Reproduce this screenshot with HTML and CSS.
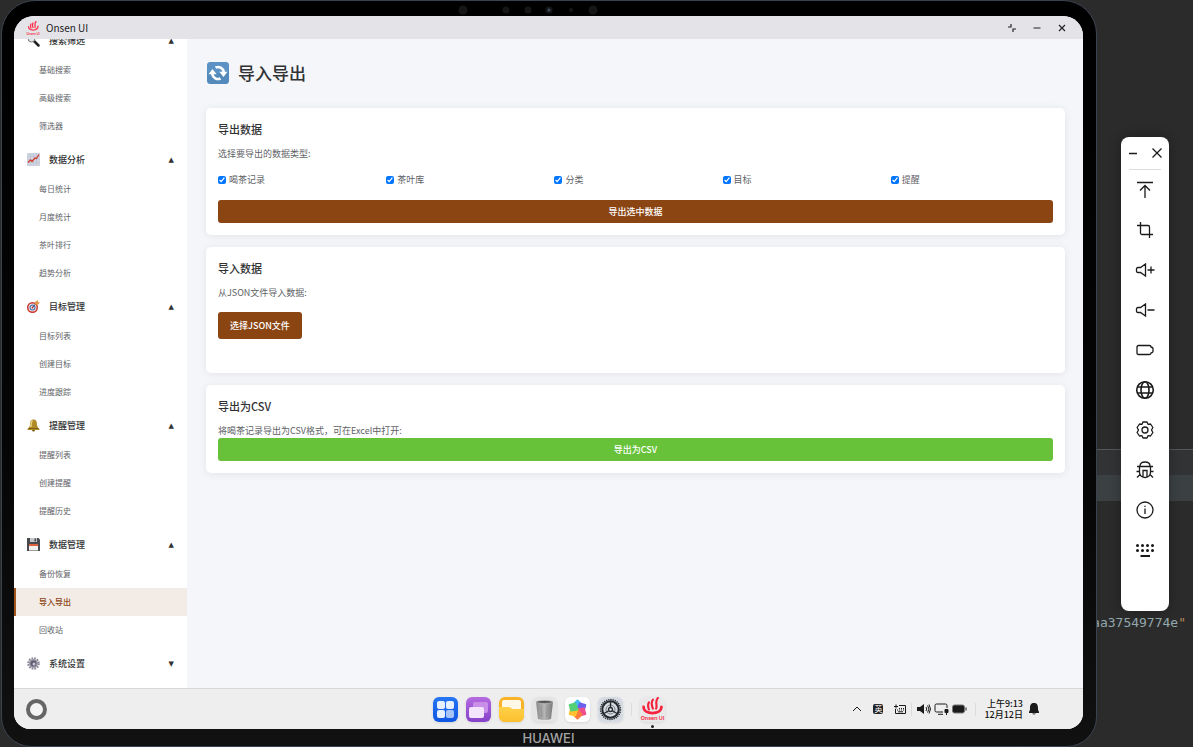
FILE: index.html
```html
<!DOCTYPE html>
<html lang="zh-CN">
<head>
    <meta charset="UTF-8">
    <title>导入导出</title>
    <link rel="stylesheet" href="styles.css">
</head>
<body>
    <div class="editor">
        <div class="editor-split"></div>
        <code class="editor-code">aa37549774e<span class="quote">"</span></code>
    </div>

    <div class="tablet">
        <svg class="sensors" width="182" height="15" viewBox="0 0 182 15">
            <g fill="#161616">
                <circle cx="5" cy="9" r="4.5"/><circle cx="48" cy="9" r="3.6"/><circle cx="70" cy="9" r="3.6"/>
                <circle cx="91" cy="9" r="3.6"/><circle cx="113" cy="9" r="2"/><circle cx="135" cy="9" r="4.5"/>
            </g>
            <circle cx="91" cy="9" r="1.5" fill="#3d4d60"/>
        </svg>

        <div class="screen">
            <header class="titlebar">
                <svg width="14" height="14" viewBox="0 0 28 28">
                    <g fill="none" stroke="#ff2d46" stroke-width="2.500" stroke-linecap="round">
                        <path d="M10 6c-2 3-1 5 0 8M14 4c-2 4-1 6 0 9M20 1c-4 5-1 8-2 12"/>
                        <path d="M5 11c0 5 4 7 9 7s10-2 10-8"/>
                    </g>
                    <text x="14" y="27" class="logo-text">Onsen UI</text>
                </svg>
                <span class="app-name">Onsen UI</span>
                <div class="window-buttons">
                    <button aria-label="还原"><svg width="10" height="10" viewBox="0 0 10 10"><path d="M1 4h3V1M9 6H6v3"/></svg></button>
                    <button aria-label="最小化"><svg width="10" height="10" viewBox="0 0 10 10"><path d="M1.500 5h7"/></svg></button>
                    <button aria-label="关闭"><svg width="10" height="10" viewBox="0 0 10 10"><path d="M2 2l6 6M8 2l-6 6"/></svg></button>
                </div>
            </header>

            <div class="app">
                <nav class="sidebar">
                    <section class="group">
                        <button class="group-title">
                            <svg width="13" height="13" viewBox="0 0 26 26"><path d="M14 14l9 9" stroke="#222" stroke-width="5" stroke-linecap="round"/><circle cx="9" cy="9" r="7" fill="#dfe9ee" stroke="#777" stroke-width="2"/></svg>
                            <span>搜索筛选</span><i class="arrow">▲</i>
                        </button>
                        <a href="#">基础搜索</a>
                        <a href="#">高级搜索</a>
                        <a href="#">筛选器</a>
                    </section>
                    <section class="group">
                        <button class="group-title">
                            <svg width="13" height="13" viewBox="0 0 26 26"><path fill="#cfd3df" d="M0 0h26v26H0z"/><path d="M0 7h26M0 13h26M0 19h26M7 0v26M13 0v26M19 0v26" stroke="#b9bfd0"/><path d="M2 19l5-5 3 3 6-7 3 1 5-8" fill="none" stroke="#d4392c" stroke-width="2.500"/></svg>
                            <span>数据分析</span><i class="arrow">▲</i>
                        </button>
                        <a href="#">每日统计</a>
                        <a href="#">月度统计</a>
                        <a href="#">茶叶排行</a>
                        <a href="#">趋势分析</a>
                    </section>
                    <section class="group">
                        <button class="group-title">
                            <svg width="13" height="13" viewBox="0 0 26 26"><circle cx="11" cy="15" r="11" fill="#c9352e"/><circle cx="11" cy="15" r="8" fill="#f1e8e8"/><circle cx="11" cy="15" r="6" fill="#3f6aa8"/><circle cx="11" cy="15" r="4" fill="#f1e8e8"/><circle cx="11" cy="15" r="2" fill="#c9352e"/><path d="M11 15l8-9" stroke="#33435c" stroke-width="2"/><path d="M16 4l6-4v4l4 1-5 5-5-1z" fill="#e09a4c"/></svg>
                            <span>目标管理</span><i class="arrow">▲</i>
                        </button>
                        <a href="#">目标列表</a>
                        <a href="#">创建目标</a>
                        <a href="#">进度跟踪</a>
                    </section>
                    <section class="group">
                        <button class="group-title">
                            <svg width="13" height="13" viewBox="0 0 26 26"><circle cx="13" cy="22" r="3" fill="#7a5a10"/><path d="M13 1c6 0 7 5 7 10 0 4 2 6 5 9v2H1v-2c3-3 5-5 5-9C6 6 7 1 13 1z" fill="#b08a26"/><path d="M11 3c-3 2-3 8-3 13" stroke="#ecd486" stroke-width="3" fill="none"/><path d="M3 19h20" stroke="#7d5d12" stroke-width="2"/></svg>
                            <span>提醒管理</span><i class="arrow">▲</i>
                        </button>
                        <a href="#">提醒列表</a>
                        <a href="#">创建提醒</a>
                        <a href="#">提醒历史</a>
                    </section>
                    <section class="group">
                        <button class="group-title">
                            <svg width="13" height="13" viewBox="0 0 26 26"><path d="M0 0h23l3 3v23H0z" fill="#484a50"/><path d="M6 0h14v8H6z" fill="#c5c7cb"/><path d="M15 1h3v6h-3z" fill="#484a50"/><path d="M4 12h18v13H4z" fill="#f3f1ef"/><path d="M4 12h18v4H4z" fill="#e0623c"/></svg>
                            <span>数据管理</span><i class="arrow">▲</i>
                        </button>
                        <a href="#">备份恢复</a>
                        <a href="#" class="active">导入导出</a>
                        <a href="#">回收站</a>
                    </section>
                    <section class="group">
                        <button class="group-title">
                            <svg width="13" height="13" viewBox="0 0 26 26"><circle cx="13" cy="13" r="10.500" fill="none" stroke="#8a8794" stroke-width="4" stroke-dasharray="3.400 2.100"/><circle cx="13" cy="13" r="9" fill="#9a98a5"/><circle cx="13" cy="13" r="6" fill="#5d5c70"/><circle cx="14" cy="14" r="3" fill="#c9c8d2"/></svg>
                            <span>系统设置</span><i class="arrow">▼</i>
                        </button>
                    </section>
                </nav>

                <main class="content">
                    <h1>
                        <svg width="24" height="24" viewBox="0 0 24 24">
                            <rect x="1" y="1" width="22" height="22" rx="3.500" fill="#5389bb"/>
                            <rect x="1" y="1" width="22" height="11" rx="3.500" fill="#629ac9" opacity=".6"/>
                            <g fill="none" stroke="#fff" stroke-width="2.600">
                                <path d="M6.200 13a6 6 0 0 0 8.300 4.500"/>
                                <path d="M17.800 11a6 6 0 0 0-8.300-4.500"/>
                            </g>
                            <path fill="#fff" d="M2.500 13.300l4-5.300 4.200 5.300zM21.500 10.700l-4 5.300-4.200-5.300z"/>
                        </svg>
                        导入导出
                    </h1>

                    <section class="card">
                        <h3>导出数据</h3>
                        <p>选择要导出的数据类型:</p>
                        <div class="options">
                            <label><input type="checkbox" checked>喝茶记录</label>
                            <label><input type="checkbox" checked>茶叶库</label>
                            <label><input type="checkbox" checked>分类</label>
                            <label><input type="checkbox" checked>目标</label>
                            <label><input type="checkbox" checked>提醒</label>
                        </div>
                        <button class="btn btn-block">导出选中数据</button>
                    </section>

                    <section class="card">
                        <h3>导入数据</h3>
                        <p>从JSON文件导入数据:</p>
                        <button class="btn btn-file">选择JSON文件</button>
                        <div class="file-status"></div>
                    </section>

                    <section class="card">
                        <h3>导出为CSV</h3>
                        <p class="tight">将喝茶记录导出为CSV格式，可在Excel中打开:</p>
                        <button class="btn btn-block btn-green">导出为CSV</button>
                    </section>
                </main>
            </div>

            <footer class="taskbar">
                <button class="home" aria-label="主页"></button>
                <div class="dock">
                    <button aria-label="应用中心"><svg viewBox="0 0 25 25">
                        <defs>
                            <linearGradient id="blue" x2="0" y2="1"><stop stop-color="#2576f5"/><stop offset="1" stop-color="#0f55e2"/></linearGradient>
                            <linearGradient id="purple" x2="0" y2="1"><stop stop-color="#b56be0"/><stop offset="1" stop-color="#8541c8"/></linearGradient>
                            <linearGradient id="yellow" x2="0" y2="1"><stop stop-color="#ffd049"/><stop offset="1" stop-color="#fcc02e"/></linearGradient>
                            <linearGradient id="metal"><stop stop-color="#8b8b8b"/><stop offset=".5" stop-color="#b5b5b5"/><stop offset="1" stop-color="#777"/></linearGradient>
                        </defs>
                        <rect width="25" height="25" rx="6" fill="url(#blue)"/>
                        <g fill="#e6f0ff"><rect x="4" y="4" width="8" height="8" rx="2"/><rect x="13" y="4" width="8" height="8" rx="2"/><rect x="4" y="13" width="8" height="8" rx="2"/><rect x="13" y="13" width="8" height="8" rx="2" opacity=".7"/></g>
                    </svg></button>
                    <button aria-label="多任务"><svg viewBox="0 0 25 25">
                        <rect width="25" height="25" rx="6" fill="url(#purple)"/>
                        <rect x="7" y="5" width="15" height="11" rx="2" fill="#c98fe8"/><rect x="3" y="10" width="15" height="11" rx="2" fill="#f3e3fc"/>
                    </svg></button>
                    <button aria-label="文件管理"><svg viewBox="0 0 25 25">
                        <rect width="25" height="25" rx="6" fill="#f9b326"/><rect x="3" y="3" width="19" height="12" rx="2" fill="#fff8e6"/>
                        <path d="M0 10h10q1 0 2 1t2 1h11v7a6 6 0 0 1-6 6H6a6 6 0 0 1-6-6z" fill="url(#yellow)"/>
                    </svg></button>
                    <button aria-label="回收站"><svg viewBox="0 0 25 25">
                        <rect width="25" height="25" rx="6" fill="#e4e4e4"/><path d="M4 5h17l-2 17q-6 2-13 0z" fill="url(#metal)"/>
                        <ellipse cx="12.500" cy="5" rx="8.500" ry="1.500" fill="#555" stroke="#bbb" stroke-width=".7"/>
                        <path d="M9 9l1 11M15.500 9l-1 11" stroke="#999" stroke-width="1.500"/>
                    </svg></button>
                    <button aria-label="图库"><svg viewBox="0 0 25 25">
                        <rect width="25" height="25" rx="6" fill="#fff"/>
                        <g transform="translate(12.500 12.500)" stroke-width="2" stroke-linejoin="round">
                            <path d="M0 0L-4-5 0-9 4-5z" fill="#46b9f0" stroke="#46b9f0"/>
                            <path d="M0 0L-4-5 0-9 4-5z" fill="#6a62ee" stroke="#6a62ee" transform="rotate(60)"/>
                            <path d="M0 0L-4-5 0-9 4-5z" fill="#ef4f8c" stroke="#ef4f8c" transform="rotate(120)"/>
                            <path d="M0 0L-4-5 0-9 4-5z" fill="#ff7a3c" stroke="#ff7a3c" transform="rotate(180)"/>
                            <path d="M0 0L-4-5 0-9 4-5z" fill="#ffc130" stroke="#ffc130" transform="rotate(240)"/>
                            <path d="M0 0L-4-5 0-9 4-5z" fill="#54cf76" stroke="#54cf76" transform="rotate(300)"/>
                        </g>
                    </svg></button>
                    <button aria-label="设置"><svg viewBox="0 0 25 25">
                        <rect width="25" height="25" rx="6" fill="#d5dae3"/>
                        <g fill="none" stroke="#25282d"><circle cx="12.500" cy="12.500" r="9.900" stroke-width="1.500" stroke-dasharray="1.300 .9"/><circle cx="12.500" cy="12.500" r="8.200" stroke-width="2"/><circle cx="12.500" cy="12.500" r="4.500" stroke="#777c85"/><circle cx="12.500" cy="12.500" r="2" stroke-width="1.300"/><path d="M12.500 5v5.500M6 16.500l4.700-2.800M19 16.500l-4.700-2.800" stroke-width="1.300"/></g>
                    </svg></button>
                    <span class="divider"></span>
                    <button class="running" aria-label="Onsen UI"><svg viewBox="0 0 28 28">
                        <rect width="28" height="28" rx="7" fill="#e9e9ea"/>
                        <g fill="none" stroke="#f5233d" stroke-width="2.400" stroke-linecap="round">
                            <path d="M10 6c-2 3-1 5 0 8M14.500 3c-3 4-1 7 0 10M20 1c-4 5 0 8-2 12"/>
                            <path d="M4 11c0 5 5 7 10 7s10-2 10-7" stroke-width="3"/>
                        </g>
                        <text x="14" y="26" class="logo-text">Onsen UI</text>
                    </svg></button>
                </div>
                <div class="tray">
                    <div class="tray-left">
                        <svg width="10" height="12" viewBox="0 0 10 12"><path d="M1 8l4-4 4 4" class="line"/></svg>
                        <span class="ime">英</span>
                        <svg width="12" height="12" viewBox="0 0 12 12"><path d="M5 2.500h6.500v8h-10V6M0 3.500h4M2 1.500v4" class="line"/><path d="M5 5.500h1M7 5.500h1M9 5.500h1M3 7h1M5 7h1M7 7h1M9 7h1M4 8.800h5" class="line"/></svg>
                    </div>
                    <span class="divider"></span>
                    <div class="tray-status">
                        <svg width="14" height="12" viewBox="0 0 14 12"><path d="M0 4h3l4-3v10L3 8H0z" fill="#1a1a1a"/><path d="M9 4q1.500 2 0 4M10.500 2.500q3 3.500 0 7M12 1.500q3 4.500 0 9" class="line"/></svg>
                        <svg width="15" height="12" viewBox="0 0 15 12"><path d="M13 5V2.500Q13 1 11.500 1h-9Q1 1 1 2.500v5Q1 9 2.500 9H9M4 11.300h5" class="line"/><rect x="10.500" y="6" width="4" height="4" rx="1" fill="#1a1a1a"/><path d="M12.500 10v2" class="line"/></svg>
                        <svg width="15" height="12" viewBox="0 0 15 12"><rect x=".500" y="2" width="12" height="8" rx="2" fill="#1a1a1a" stroke="#777"/><path d="M14 4.500v3" class="line"/></svg>
                    </div>
                    <span class="divider"></span>
                    <div class="clock"><span>上午9:13</span><span>12月12日</span></div>
                    <svg width="10" height="12" viewBox="0 0 10 12"><path d="M5 0c3 0 4 2 4 5 0 2 0 2 1 4v1H0V9c1-2 1-2 1-4 0-3 1-5 4-5zM3 10.500h4q-2 2-4 0z" fill="#1a1a1a"/></svg>
                </div>
            </footer>
        </div>

        <div class="brand">HUAWEI</div>
    </div>

    <aside class="tools">
        <div class="tools-head">
            <button aria-label="最小化"><svg width="12" height="12" viewBox="0 0 12 12"><path d="M2 6.500h8" stroke-width="1.500"/></svg></button>
            <button aria-label="关闭"><svg width="12" height="12" viewBox="0 0 12 12"><path d="M1.500 1.500l9 9M10.500 1.500l-9 9"/></svg></button>
        </div>
        <button aria-label="上滑"><svg width="20" height="20" viewBox="0 0 20 20"><path d="M2 2.500h16M10 18V5.500M5 10.500l5-5 5 5"/></svg></button>
        <button aria-label="截图"><svg width="20" height="20" viewBox="0 0 20 20"><path d="M5.500 2v11q0 1.500 1.500 1.500h11M2 5.500h11q1.500 0 1.500 1.500v11"/></svg></button>
        <button aria-label="音量加"><svg width="20" height="20" viewBox="0 0 20 20"><path d="M10.500 4v12L5.500 12.500H3Q1.500 12.500 1.500 11V9Q1.500 7.500 3 7.500h2.500zM12.500 10h7M16 6.500v7"/></svg></button>
        <button aria-label="音量减"><svg width="20" height="20" viewBox="0 0 20 20"><path d="M10.500 4v12L5.500 12.500H3Q1.500 12.500 1.500 11V9Q1.500 7.500 3 7.500h2.500zM12.500 10h7"/></svg></button>
        <button aria-label="电池"><svg width="20" height="20" viewBox="0 0 20 20"><path d="M3.500 5.500h11q1.500 0 1.500 1.500 2 .5 2 1.500v3q0 1-2 1.500 0 1.500-1.500 1.500h-11Q2 14.500 2 13V7q0-1.500 1.500-1.500z"/></svg></button>
        <button aria-label="网络"><svg width="20" height="20" viewBox="0 0 20 20"><g stroke-width="1.600"><circle cx="10" cy="10" r="8.300"/><ellipse cx="10" cy="10" rx="4" ry="8.300"/><path d="M2.500 7h15M2.500 13h15"/></g></svg></button>
        <button aria-label="设置"><svg width="20" height="20" viewBox="0 0 20 20"><path d="M8 2h4l1 2.300 2.500-.3 2.400 3.500L16.500 10l1.400 2.500-2.400 3.500-2.500-.3L12 18H8l-1-2.300-2.500.3-2.400-3.500L3.500 10 2.100 7.500 4.500 4l2.500.3z" stroke-linejoin="round"/><circle cx="10" cy="10" r="3"/></svg></button>
        <button aria-label="调试"><svg width="20" height="20" viewBox="0 0 20 20"><path d="M5 6q0-4 5-4t5 4M2 6.500h16M4.500 6.500V12q0 5 5.500 5.500 5.500-.5 5.500-5.500V6.500M8 17v-6.500h4V17M1.500 11.500h3M15.500 11.500h3M5 14.500l-3 3M15 14.500l3 3"/></svg></button>
        <button aria-label="信息"><svg width="20" height="20" viewBox="0 0 20 20"><circle cx="10" cy="10" r="8"/><path d="M10 8.500V14M10 5.800v1.200"/></svg></button>
        <button aria-label="键盘"><svg width="20" height="20" viewBox="0 0 20 20"><path d="M2.500 5.500h.01M7.500 5.500h.01M12.500 5.500h.01M17.500 5.500h.01M2.500 10.500h.01M7.500 10.500h.01M12.500 10.500h.01M17.500 10.500h.01" stroke-width="3" stroke-linecap="round"/><path d="M5.500 16h9.500" stroke-width="2"/></svg></button>
    </aside>
</body>
</html>
```
FILE: styles.css
```css
* {
    box-sizing: border-box;
}

body {
    position: relative;
    display: flex;
    height: 100vh;
    margin: 0;
    overflow: hidden;
    background: #2b2b2b;
    font-family: "Noto Sans CJK SC", sans-serif;
    font-size: 9px;
    line-height: 14px;
    color: #303133;
}

button {
    padding: 0;
    border: 0;
    background: none;
    font: inherit;
    color: inherit;
}

svg {
    display: block;
    flex: none;
}

/* code editor behind the tablet */
.editor {
    position: absolute;
    top: 0;
    right: 0;
    bottom: 0;
    width: 97px;
    display: flex;
    flex-direction: column;
    justify-content: flex-end;
    align-items: flex-end;
}

.editor-split {
    width: 100%;
    height: 52px;
    border-top: 1px solid #555758;
    background: linear-gradient(#313335 25px, #3b4043 25px);
}

.editor-code {
    padding: 112px 7px 114px 0;
    font: 13px/20px "DejaVu Sans Mono", monospace;
    color: #93a7ad;
}

.quote {
    color: #b98a5c;
}

/* tablet */
.tablet {
    position: relative;
    flex: 1;
    display: flex;
    flex-direction: column;
    min-width: 0;
    margin: 0 96px 0 1px;
    padding: 0 13px 0 12px;
    border: 1px solid #3b4350;
    border-radius: 34px 34px 30px 30px;
    background: linear-gradient(#000, #050505 60%, #111);
}

.sensors {
    align-self: center;
}

.screen {
    flex: 1;
    display: flex;
    flex-direction: column;
    min-height: 0;
    overflow: hidden;
    border-radius: 20px 20px 16px 16px;
    background: #f5f6fa;
}

.brand {
    height: 17px;
    text-align: center;
    font-family: Inter, sans-serif;
    font-size: 13px;
    font-weight: 500;
    line-height: 19px;
    color: #a5a5a5;
}

.titlebar {
    display: flex;
    align-items: center;
    gap: 6px;
    height: 23px;
    padding: 0 14px 0 12px;
    background: #e4e3e8;
}

.logo-text {
    font-family: Inter, sans-serif;
    font-size: 6px;
    font-weight: 600;
    text-anchor: middle;
    fill: #f5233d;
}

.app-name {
    font-size: 10px;
    color: #1c1c1e;
}

.window-buttons {
    display: flex;
    gap: 11px;
    margin-left: auto;
}

.window-buttons button {
    width: 14px;
    height: 14px;
    display: flex;
    align-items: center;
    justify-content: center;
}

.window-buttons path {
    fill: none;
    stroke: #222;
    stroke-width: 1.2;
}

.app {
    flex: 1;
    display: flex;
    min-height: 0;
}

/* scrolled to its end */
.sidebar {
    width: 173px;
    display: flex;
    flex-direction: column;
    justify-content: flex-end;
    padding-bottom: 5px;
    overflow: hidden;
    background: #fff;
}

.group {
    flex: none;
    margin-bottom: 4px;
}

.group-title {
    display: flex;
    align-items: center;
    gap: 9px;
    width: 100%;
    height: 31px;
    padding: 0 13px;
    font-weight: 500;
}

.arrow {
    margin-left: auto;
    font-family: "DejaVu Sans", sans-serif;
    font-size: 7px;
    font-style: normal;
}

.group a {
    display: block;
    height: 28px;
    padding-left: 25px;
    font-size: 8px;
    line-height: 28px;
    color: #606266;
    text-decoration: none;
}

.group a.active {
    padding-left: 23px;
    border-left: 2px solid #a0561f;
    background: #f3ebe6;
    font-weight: 500;
    color: #8b4513;
}

.content {
    flex: 1;
    display: flex;
    flex-direction: column;
    gap: 12px;
    min-width: 0;
    padding: 22px 18px 0 19px;
}

h1 {
    display: flex;
    align-items: center;
    gap: 8px;
    margin: 0 0 11px;
    font-size: 17px;
    font-weight: 500;
    line-height: 24px;
}

.card {
    padding: 12px;
    border-radius: 5px;
    background: #fff;
    box-shadow: 0 1px 8px rgba(0, 0, 0, 0.08);
}

h3 {
    margin: 0 0 9px;
    font-size: 11px;
    font-weight: 500;
    line-height: 18px;
}

p {
    margin: 0 0 12px;
    color: #606266;
}

.tight {
    margin: 0;
}

.options {
    display: grid;
    grid-template-columns: repeat(5, 1fr);
    gap: 6px;
    margin-bottom: 13px;
    color: #606266;
}

.options label {
    display: flex;
    align-items: center;
    gap: 3px;
}

.options input {
    width: 8px;
    height: 8px;
    margin: 0;
    accent-color: #0075ff;
}

.btn {
    border-radius: 3px;
    background: #8b4513;
    font-weight: 500;
    color: #fff;
}

.btn-block {
    display: block;
    width: 100%;
    height: 23px;
}

.btn-green {
    background: #67c23a;
}

.btn-file {
    display: block;
    height: 27px;
    padding: 0 12px;
}

.file-status {
    height: 22px;
}

/* taskbar */
.taskbar {
    display: grid;
    grid-template-columns: 1fr auto 1fr;
    align-items: center;
    height: 41px;
    padding: 0 44px 0 12px;
    border-top: 1px solid #d6d7da;
    background: #eee;
}

.home {
    width: 21px;
    height: 21px;
    border: 4px solid #666;
    border-radius: 50%;
    background: #f4f4f4;
}

.dock {
    display: flex;
    align-items: center;
    gap: 8px;
    margin-left: 32px;
}

.dock button {
    position: relative;
    width: 25px;
    height: 25px;
    border-radius: 6px;
    box-shadow: 0 1px 3px rgba(0, 0, 0, 0.1);
}

.running::after {
    content: "";
    position: absolute;
    left: 11px;
    bottom: -6px;
    width: 3px;
    height: 3px;
    border-radius: 50%;
    background: #222;
}

.divider {
    width: 1px;
    height: 13px;
    background: #dcdcdc;
}

.tray {
    display: flex;
    align-items: center;
    justify-content: flex-end;
    gap: 5px;
    color: #111;
}

.tray-left {
    display: flex;
    align-items: center;
    gap: 11px;
}

.tray-status {
    display: flex;
    gap: 3px;
    margin-right: 3px;
}

.tray .line {
    fill: none;
    stroke: #1a1a1a;
}

.ime {
    width: 10px;
    height: 10px;
    border-radius: 2px;
    background: #222;
    font-size: 8px;
    line-height: 10px;
    text-align: center;
    color: #fff;
}

.clock {
    display: flex;
    flex-direction: column;
    margin: 0 1px 0 3px;
    font-weight: 500;
    line-height: 11px;
    text-align: right;
}

/* floating emulator toolbar */
.tools {
    position: absolute;
    top: 137px;
    right: 24px;
    display: flex;
    flex-direction: column;
    width: 48px;
    padding: 0 8px 41px;
    border-radius: 8px;
    background: #fff;
    box-shadow: 0 0 12px rgba(0, 0, 0, 0.3);
}

.tools button {
    display: flex;
    align-items: center;
    justify-content: center;
    height: 40px;
}

.tools svg {
    fill: none;
    stroke: #1a1a1a;
    stroke-width: 1.3;
}

.tools .tools-head {
    display: flex;
    justify-content: space-between;
    border-bottom: 1px solid #ddd;
}

.tools .tools-head button {
    height: 32px;
    margin: 0 -2px;
}
```
